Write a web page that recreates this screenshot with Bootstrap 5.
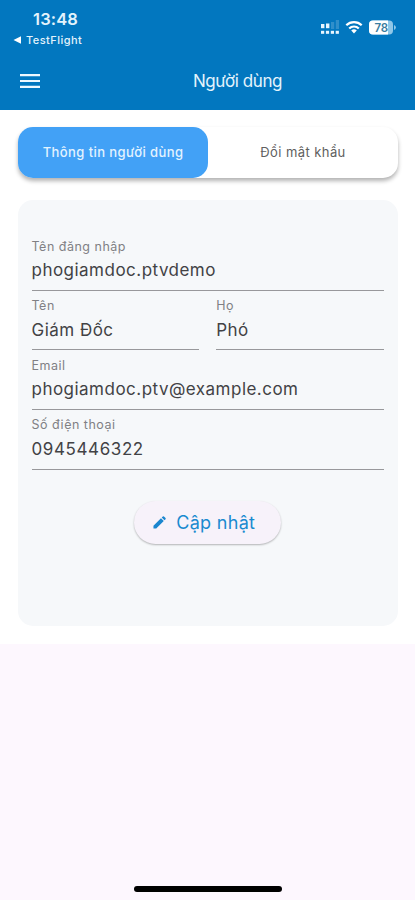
<!DOCTYPE html>
<html lang="vi">
<head>
<meta charset="utf-8">
<meta name="viewport" content="width=device-width, initial-scale=1">
<title>Người dùng</title>
<link href="https://cdn.jsdelivr.net/npm/bootstrap@5.3.0/dist/css/bootstrap.min.css" rel="stylesheet">
<style>
body{font-family:Inter,Roboto,sans-serif;background:#fdf7fe;height:900px;overflow:hidden}
.app-head{background:#0277bf;height:109.5px;color:#e3f3fc}
.status{height:54px}
.clock{font-size:16.5px;font-weight:600;line-height:20px;padding:9px 0 0 33px;letter-spacing:.15px}
.back-app{font-size:11px;font-weight:500;line-height:14px;padding:4px 0 0 13px;letter-spacing:.45px}
.back-app svg{margin-right:5px}
.sys-icons{padding:18px 19px 0 0;gap:6px}
.title-bar{height:54px}
.menu-btn{padding:0 0 0 20px;width:60px;line-height:0;border:0;background:none;text-align:left}
.page-title{font-size:17px;letter-spacing:-.4px;padding-top:2px}
.sheet{height:534px;padding:17.5px 17px 0 18px}
.tabs-box{height:51px;border-radius:15px;box-shadow:0 3px 4px rgba(0,0,0,.3)}
.tabs-box .nav-link{height:51px;border-radius:15px;font-size:13px;letter-spacing:.42px;color:#606060;padding:0}
.tabs-box .nav-link.active{background:#42a1f6;color:#e2f3ff;font-weight:500}
.form-box{margin-top:22px;height:426px;border-radius:15px;background:#f6f8fa;padding:37px 14px 0 13.5px}
.fld{height:59.6px}
.fld-in{height:53.8px;border-bottom:1.2px solid #98989b;padding-top:.6px}
.fld label{display:block;font-size:12.5px;line-height:18px;color:#808084;letter-spacing:.5px}
.fld input{display:block;width:100%;border:0;background:none;padding:0;outline:0;font-size:17px;line-height:24px;height:24px;margin-top:2.700px;color:#424245;letter-spacing:.48px}
.fld #p{letter-spacing:.6px}
.pair{gap:17px}
.save{margin-top:26px;width:147px;height:43px;border-radius:22px;background:#f7f2fa;color:#1a8ad0;font-size:18px;letter-spacing:.3px;box-shadow:0 1px 2px rgba(0,0,0,.28);padding:0 7px 0 0;gap:10px}
.home-bar{width:148px;height:6px;border-radius:3px;background:#000;margin:242.5px 0 0 134px}
</style>
</head>
<body>
<header class="app-head">
  <div class="status d-flex justify-content-between align-items-start">
    <div>
      <div class="clock">13:48</div>
      <div class="back-app d-flex align-items-center"><svg width="8" height="8" viewBox="0 0 8 8"><path d="M8 .3v7.4L.5 4z" fill="#fff"/></svg>TestFlight</div>
    </div>
    <div class="sys-icons d-flex align-items-center">
      <svg width="18" height="18" viewBox="0 0 18 18"><g fill="#e8f6ff"><rect x="0" y="6" width="3.400" height="4.200"/><rect x="5" y="5.500" width="3.400" height="4.700"/><rect x="0" y="12.800" width="3.200" height="3"/><rect x="4.900" y="12.800" width="3.200" height="3"/><rect x="9.800" y="12.800" width="3.200" height="3"/><rect x="14.700" y="12.800" width="3.200" height="3"/></g><g fill="#fff" opacity=".18"><rect x="10" y="4" width="3.200" height="7"/><rect x="14.800" y="2" width="3.200" height="9"/></g></svg>
      <svg width="18" height="14" viewBox="0 0 18 14"><g fill="none" stroke="#fff" stroke-width="2.200"><path d="M1.300 5.300a11 11 0 0 1 15.400 0"/><path d="M4.200 8.500a6.800 6.800 0 0 1 9.600 0"/></g><path d="M9 13.500L6.200 10.600a4 4 0 0 1 5.600 0z" fill="#fff"/></svg>
      <svg width="27" height="15" viewBox="0 0 27 15"><rect width="24" height="14" y=".5" rx="4" fill="#8fc7e8"/><path d="M4 .5h15v14H4a4 4 0 0 1-4-4v-6a4 4 0 0 1 4-4z" fill="#fff"/><path d="M25 5a2.600 2.600 0 0 1 0 5z" fill="#8fc7e8"/><text x="12.300" y="11.700" text-anchor="middle" font-size="11.500" font-weight="600" fill="#3a7d9f">78</text></svg>
    </div>
  </div>
  <div class="title-bar d-flex align-items-center">
    <button class="menu-btn" aria-label="Menu"><svg width="20" height="14" viewBox="0 0 20 14"><path d="M0 1.200h20M0 7h20M0 12.800h20" stroke="#eef8ff" stroke-width="2.200"/></svg></button>
    <div class="page-title flex-grow-1 text-center">Người dùng</div>
  </div>
</header>
<main class="sheet bg-white">
  <ul class="nav nav-pills nav-fill tabs-box bg-white flex-nowrap">
    <li class="nav-item w-50"><a class="nav-link active d-flex align-items-center justify-content-center" href="#">Thông tin người dùng</a></li>
    <li class="nav-item w-50"><a class="nav-link d-flex align-items-center justify-content-center" href="#">Đổi mật khẩu</a></li>
  </ul>
  <form class="form-box">
    <div class="fld"><div class="fld-in"><label for="u">Tên đăng nhập</label><input id="u" value="phogiamdoc.ptvdemo"></div></div>
    <div class="pair d-flex">
      <div class="fld flex-fill"><div class="fld-in"><label for="f">Tên</label><input id="f" value="Giám Đốc"></div></div>
      <div class="fld flex-fill"><div class="fld-in"><label for="l">Họ</label><input id="l" value="Phó"></div></div>
    </div>
    <div class="fld"><div class="fld-in"><label for="e">Email</label><input id="e" value="phogiamdoc.ptv@example.com"></div></div>
    <div class="fld"><div class="fld-in"><label for="p">Số điện thoại</label><input id="p" value="0945446322"></div></div>
    <button type="button" class="btn save d-flex align-items-center justify-content-center mx-auto"><svg width="13" height="13" viewBox="0 0 14 14"><path d="M.5 13.500v-3L8.600 2.400l3 3-8.100 8.100zM9.400 1.600L10.600.5q.6-.5 1.200 0l1.700 1.700q.5.600 0 1.200l-1.100 1.200z" fill="#1a86cf"/></svg>Cập nhật</button>
  </form>
</main>
<div class="home-bar"></div>
<script src="https://cdn.jsdelivr.net/npm/bootstrap@5.3.0/dist/js/bootstrap.bundle.min.js"></script>
</body>
</html>
